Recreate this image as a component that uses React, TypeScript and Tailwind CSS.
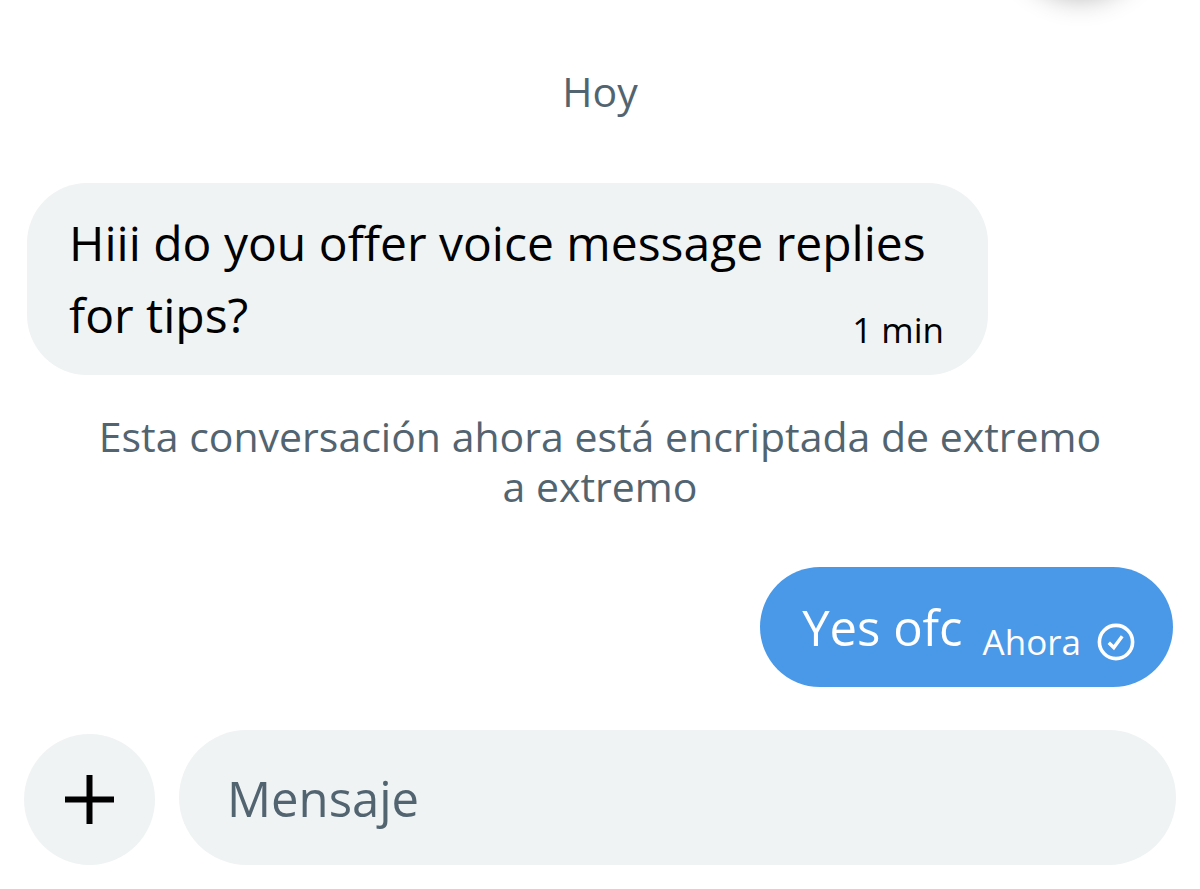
import React from "react"

function SystemText({ children }: { children: React.ReactNode }) {
  return (
    <p className="text-center text-[41px] leading-[50px] text-[#536471]">
      {children}
    </p>
  )
}

function SentIcon() {
  return (
    <svg
      viewBox="0 0 38 38"
      className="h-[38px] w-[38px] shrink-0"
      fill="none"
      stroke="currentColor"
      role="img"
      aria-label="Enviado"
    >
      <circle cx="19" cy="19" r="16.6" strokeWidth="3.6" />
      <path d="M11.8 19.8l5 4.8 8.4-11.4" strokeWidth="3.4" />
    </svg>
  )
}

function App() {
  return (
    <div className="relative flex flex-col overflow-hidden bg-white font-['Open_Sans',sans-serif]">
      {/* Floating header button, scrolled out of view */}
      <div className="absolute -top-[138px] right-[54px] h-[132px] w-[132px] rounded-full bg-white shadow-[0_4px_28px_rgba(0,0,0,0.3)]" />

      <main className="flex flex-col px-[27px] pt-[66px]">
        <SystemText>Hoy</SystemText>

        <div className="mt-[67px] max-w-[961px] self-start rounded-[60px] bg-[#eff3f4] py-6 pr-11 pl-[42px] text-black">
          <p className="text-[48px] leading-[72px]">
            Hiii do you offer voice message replies for tips?
            <time className="float-right mt-[31px] text-[35px] leading-10">
              1 min
            </time>
          </p>
        </div>

        <div className="mt-9 px-14">
          <SystemText>
            Esta conversación ahora está encriptada de extremo a extremo
          </SystemText>
        </div>

        <div className="mt-14 flex items-end gap-5 self-end rounded-[60px] bg-[#4a99e9] py-6 pr-[38px] pl-[42px] text-white">
          <p className="text-[49px] leading-[72px]">Yes ofc</p>
          <div className="flex items-center gap-4">
            <time className="text-[35px] leading-[42px]">Ahora</time>
            <SentIcon />
          </div>
        </div>
      </main>

      <form
        className="mt-[43px] flex items-end gap-6 px-6 pb-6"
        onSubmit={(e) => e.preventDefault()}
      >
        <button
          type="button"
          aria-label="Añadir"
          className="flex h-[131px] w-[131px] shrink-0 items-center justify-center rounded-full bg-[#eff3f4] text-black"
        >
          <svg
            viewBox="0 0 49 49"
            className="h-[49px] w-[49px]"
            stroke="currentColor"
            strokeWidth="6"
          >
            <path d="M24.5 0v49M0 24.5h49" />
          </svg>
        </button>
        <input
          type="text"
          aria-label="Mensaje"
          placeholder="Mensaje"
          className="h-[135px] min-w-0 flex-1 rounded-full bg-[#eff3f4] px-12 text-[49px] text-black outline-none placeholder:text-[#536471]"
        />
      </form>
    </div>
  )
}

export default App
